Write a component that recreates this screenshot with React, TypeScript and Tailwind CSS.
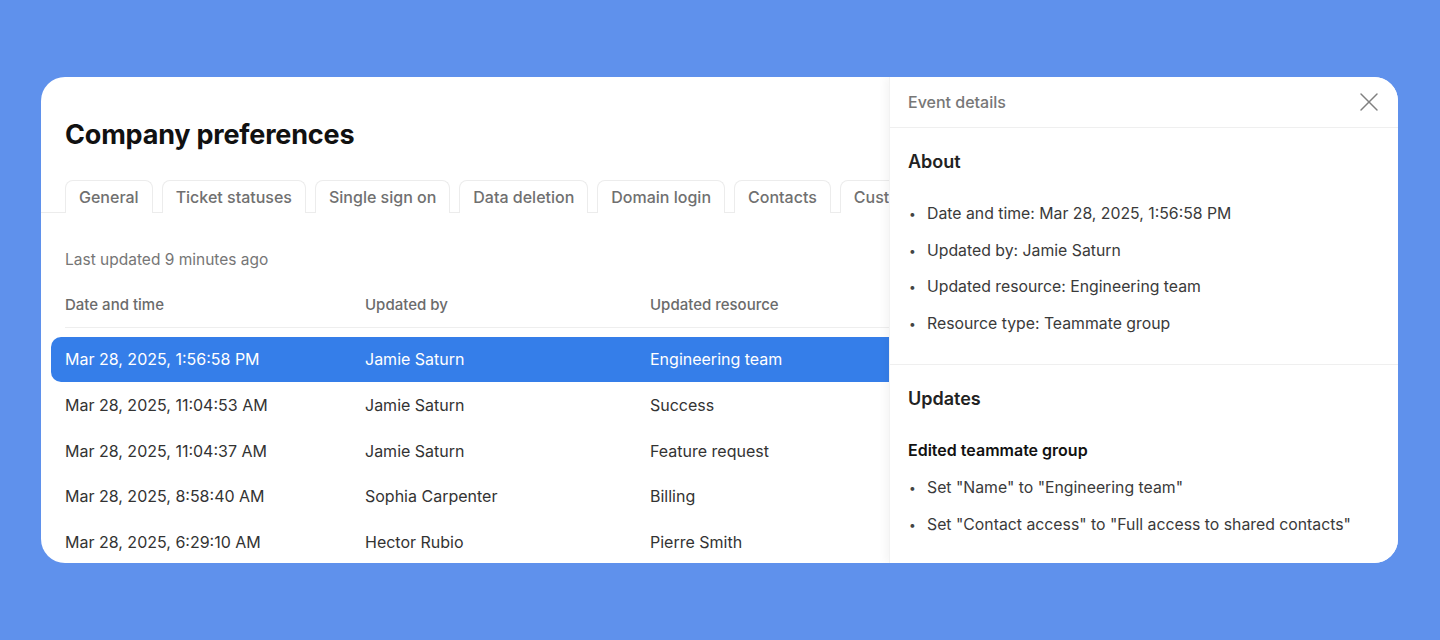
import { X } from 'lucide-react'

const tabs = ['General', 'Ticket statuses', 'Single sign on', 'Data deletion', 'Domain login', 'Contacts', 'Custom fields', 'Tags']

const rows = [
  { date: 'Mar 28, 2025, 1:56:58 PM', by: 'Jamie Saturn', resource: 'Engineering team' },
  { date: 'Mar 28, 2025, 11:04:53 AM', by: 'Jamie Saturn', resource: 'Success' },
  { date: 'Mar 28, 2025, 11:04:37 AM', by: 'Jamie Saturn', resource: 'Feature request' },
  { date: 'Mar 28, 2025, 8:58:40 AM', by: 'Sophia Carpenter', resource: 'Billing' },
  { date: 'Mar 28, 2025, 6:29:10 AM', by: 'Hector Rubio', resource: 'Pierre Smith' },
]

const about = [
  'Date and time: Mar 28, 2025, 1:56:58 PM',
  'Updated by: Jamie Saturn',
  'Updated resource: Engineering team',
  'Resource type: Teammate group',
]

const updates = ['Set "Name" to "Engineering team"', 'Set "Contact access" to "Full access to shared contacts"']

function Bullet({ children }: { children: React.ReactNode }) {
  return (
    <li className="flex items-center h-[36.5px] text-[15.8px] text-[#3a3a3a]">
      <span className="w-[19px] pl-[1px] text-[12px] text-[#444]">•</span>
      {children}
    </li>
  )
}

export default function App() {
  return (
    <div
      className="w-[1440px] h-[640px] bg-[#5f91ec] pt-[77px] pl-[41px] pr-[42px]"
      style={{ fontFamily: 'Inter, "Noto Sans", sans-serif' }}
    >
      <div className="flex h-[486px] bg-white rounded-[24px] overflow-hidden">
        {/* 左側：設定と履歴テーブル */}
        <div className="flex-1 min-w-0 overflow-hidden">
          <h1 className="pl-6 pt-[40px] h-[103px] text-[27px] font-bold text-[#111] tracking-[-0.2px] leading-[36px]">
            Company preferences
          </h1>
          <div className="flex gap-[9px] pl-6 border-b border-[#ececec] whitespace-nowrap">
            {tabs.map((t) => (
              <div
                key={t}
                className="h-[33px] px-[13px] flex items-center border border-b-0 border-[#ececec] rounded-t-[8px] text-[16px] font-medium text-[#707070] -mb-px bg-white"
              >
                {t}
              </div>
            ))}
          </div>

          <div className="pl-6 pt-[37px] text-[15.5px] text-[#767676] h-[71px] leading-[20px]">Last updated 9 minutes ago</div>

          <div className="ml-6 flex h-[44px] items-center border-b border-[#eeeeee] text-[15px] font-medium text-[#6b6b6b]">
            <div className="w-[300px]">Date and time</div>
            <div className="w-[285px]">Updated by</div>
            <div>Updated resource</div>
          </div>

          <div className="pt-[9px] pl-[10px]">
            {rows.map((r, i) => (
              <div
                key={r.date}
                className={
                  i === 0
                    ? 'flex items-center h-[45px] mb-px pl-[14px] pb-[2px] rounded-l-[10px] bg-[#357ee9] text-white text-[16px]'
                    : 'flex items-center h-[45.75px] pl-[14px] pb-[2px] text-[#333] text-[16px]'
                }
              >
                <div className="w-[300px]">{r.date}</div>
                <div className="w-[285px]">{r.by}</div>
                <div>{r.resource}</div>
              </div>
            ))}
          </div>
        </div>

        {/* 右側：イベント詳細パネル */}
        <div className="w-[509px] shrink-0 bg-white shadow-[-4px_0_8px_rgba(0,0,0,0.04)] border-l border-[#f2f2f2]">
          <div className="h-[51px] flex items-center justify-between pl-[18px] pr-[13px] pb-[1px] border-b border-[#efefef]">
            <span className="text-[16px] font-medium text-[#777]">Event details</span>
            <X className="w-[32px] h-[32px] text-[#808080]" strokeWidth={1.1} />
          </div>

          <div className="pl-[18px] pt-[22px] pb-[22px] border-b border-[#efefef]">
            <h2 className="text-[18px] font-semibold text-[#222] leading-[24px]">About</h2>
            <ul className="mt-[22px]">
              {about.map((a) => (
                <Bullet key={a}>{a}</Bullet>
              ))}
            </ul>
          </div>

          <div className="pl-[18px] pt-[22px]">
            <h2 className="text-[18px] font-semibold text-[#222] leading-[24px]">Updates</h2>
            <div className="mt-[29px] text-[16px] font-semibold text-[#111] leading-[20px]">Edited teammate group</div>
            <ul className="mt-[10px]">
              {updates.map((u) => (
                <Bullet key={u}>{u}</Bullet>
              ))}
            </ul>
          </div>
        </div>
      </div>
    </div>
  )
}
